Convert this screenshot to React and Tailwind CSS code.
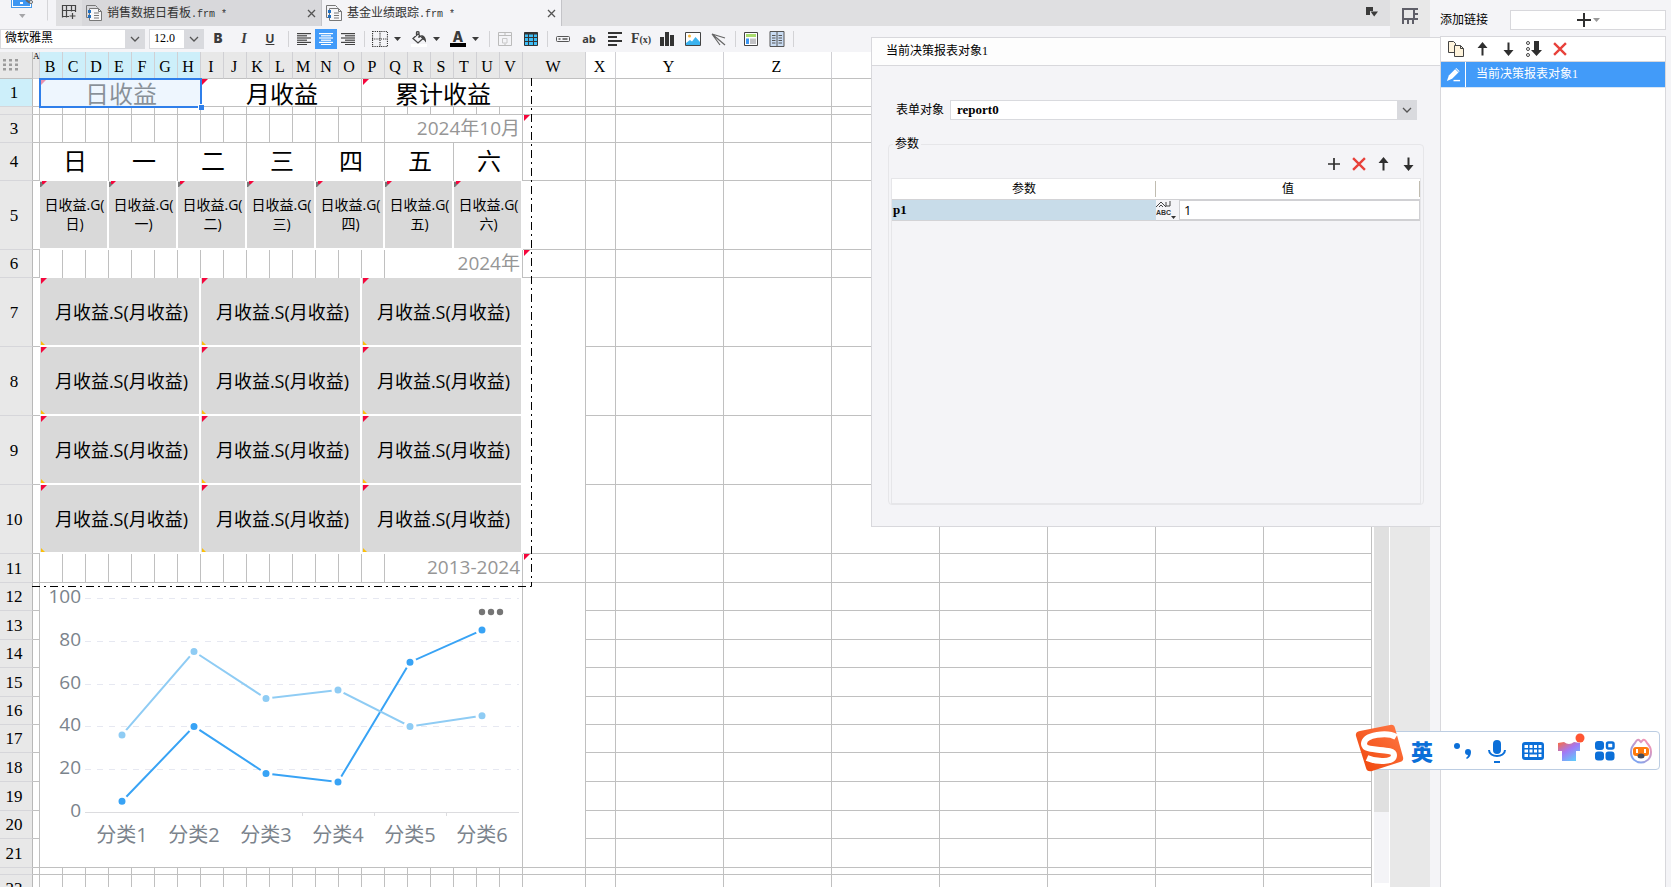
import React, { useState } from 'react';
import clsx from 'clsx';

const SERIF = "font-['Liberation_Serif','Noto_Sans_CJK_SC',serif]";
const SANS = "font-['Open_Sans','Noto_Sans_CJK_SC',sans-serif]";

const NARROW_COLS = 'BCDEFGHIJKLMNOPQRSTUV'.split('');
const WIDE_COLS = ['Y', 'Z', 'AA', 'AB', 'AC', 'AD', 'AE'];
const WEEKDAYS = ['日', '一', '二', '三', '四', '五', '六'];
const TITLES = ['日收益', '月收益', '累计收益'];

const CHART = {
  categories: ['分类1', '分类2', '分类3', '分类4', '分类5', '分类6'],
  series: [
    { color: '#38a3f5', values: [5, 40, 18, 14, 70, 85] },
    { color: '#8fccf4', values: [36, 75, 53, 57, 40, 45] },
  ],
};

/* ---------- icons ---------- */

const Icon = ({ size = 16, children, className }) => (
  <svg width={size} height={size} viewBox="0 0 16 16" fill="none" className={clsx('shrink-0', className)}>
    {children}
  </svg>
);

const ChevronIcon = () => (
  <svg width="10" height="6" viewBox="0 0 10 6" fill="none" stroke="#555" strokeWidth="1.3">
    <path d="M1 1l4 4 4-4" />
  </svg>
);

const CaretIcon = ({ color = '#3b3b3b' }) => (
  <svg width="7" height="4" viewBox="0 0 7 4" fill={color}>
    <path d="M0 0h7L3.5 4z" />
  </svg>
);

const CloseIcon = () => (
  <svg width="9" height="9" viewBox="0 0 9 9" stroke="#555" strokeWidth="1.3">
    <path d="M1 1l7 7M8 1L1 8" />
  </svg>
);

const FormIcon = () => (
  <Icon>
    <path d="M3.5 12.5h-3V.5h9l2 2" stroke="#777" />
    <path d="M3.5 3.500h9l3 3v9h-12z" fill="#f6f6f8" stroke="#777" />
    <path d="M12.500 3.500v3h3M8 8h5M8 10.500h5M8 13h5" stroke="#777" />
    <path d="M2 5h3v3H2zM2 10h3v3H2z" fill="#1f6fc0" />
  </Icon>
);

const GridAddIcon = () => (
  <Icon>
    <path d="M1.500 13.500V1.500h13V8M1.500 6.500h13M5.500 1.500v12M10.500 1.500v6M1 12.500h7M11.500 9v6M8.500 12h6" stroke="#444" strokeWidth="1.200" />
  </Icon>
);

const AlignIcon = ({ widths, offset, color = '#444' }) => (
  <svg width="14" height="12" viewBox="0 0 14 12" fill={color}>
    {widths.map((w, i) => (
      <rect key={i} x={offset(w)} y={i * 2.2} width={w} height="1.2" />
    ))}
  </svg>
);

const PlusIcon = ({ size = 14 }) => (
  <svg width={size} height={size} viewBox="0 0 14 14" stroke="#2f2f2f" strokeWidth="2">
    <path d="M7 0v14M0 7h14" />
  </svg>
);

const DeleteIcon = () => (
  <svg width="14" height="14" viewBox="0 0 13 13" stroke="#e8413a" strokeWidth="2.200">
    <path d="M1 1l11 11M12 1L1 12" />
  </svg>
);

const UpIcon = () => (
  <svg width="11" height="14" viewBox="0 0 11 14">
    <path d="M5.500 0L10.500 6H6.500v7.500h-2V6H.5z" fill="#2f2f2f" />
  </svg>
);

const DownIcon = () => (
  <svg width="11" height="14" viewBox="0 0 11 14">
    <path d="M5.500 14L10.500 8H6.500V.5h-2V8H.5z" fill="#2f2f2f" />
  </svg>
);

/* ---------- top bars ---------- */

const FileTab = ({ name, active }) => (
  <div
    className={clsx(
      'flex h-[26px] w-[240px] items-center border-r border-[#c4c4c8] pl-1 pr-1 text-xs text-[#333]',
      active ? 'bg-[#f4f4f7]' : 'bg-[#d8d8db]'
    )}
  >
    <FormIcon />
    <span className="ml-[5px] flex-1 whitespace-nowrap">
      {name}<span className="font-['Liberation_Mono',monospace] text-[10px]">.frm *</span>
    </span>
    <button type="button" aria-label="关闭" className="p-px"><CloseIcon /></button>
  </div>
);

const TabBar = () => (
  <div className="flex h-[26px] shrink-0 overflow-hidden bg-[#dfdfe1]">
    <div className="flex w-[56px] shrink-0 bg-[#f4f4f7]">
      <svg width="56" height="26" viewBox="0 0 56 26">
        <rect x="11.500" y="-8" width="20" height="15.500" fill="#fff" stroke="#4a9bea" />
        <rect x="13" y="-6" width="17" height="12" fill="#3d97f3" />
        <rect x="20" y="2" width="3" height="2" fill="#fff" />
        <path d="M26 0l4 3" stroke="#666" strokeWidth="2" />
        <circle cx="31" cy="2" r="1.500" fill="#fff" stroke="#666" />
        <path d="M19 14h6.500l-3.200 4z" fill="#a5a5a8" />
        <path d="M47.500 0v20.500" stroke="#d5d5d8" />
      </svg>
    </div>
    <button type="button" aria-label="新建" className="flex w-[26px] shrink-0 items-center justify-center pb-0.5">
      <GridAddIcon />
    </button>
    <FileTab name="销售数据日看板" />
    <FileTab name="基金业绩跟踪" active />
    <div className="flex flex-1 items-start justify-end pr-3 pt-[7px]">
      <svg width="12" height="11" viewBox="0 0 12 11">
        <path d="M0 0h7v4H4v4H0z" fill="#3b3b3b" />
        <path d="M4.500 4.500H12L8.200 9.500z" fill="#3b3b3b" />
      </svg>
    </div>
  </div>
);

const ToolButton = ({ label, active, className = 'w-[26px]', children }) => (
  <button
    type="button"
    aria-label={label}
    className={clsx('flex h-5 shrink-0 items-center justify-center text-[#3b3b3b]', className, active && 'bg-[#429bf9]')}
  >
    {children}
  </button>
);

const Divider = ({ className = 'w-[6px]' }) => (
  <div className={clsx('flex shrink-0 justify-center', className)}>
    <div className="h-4 w-px bg-[#d3d3d6]" />
  </div>
);

const DropButton = ({ label, children }) => (
  <ToolButton label={label} className="mr-1 w-[35px]">
    <span className="flex w-[22px] justify-center">{children}</span>
    <span className="flex w-[13px] justify-center"><CaretIcon /></span>
  </ToolButton>
);

const Combo = ({ label, value, className }) => (
  <div className={clsx('relative h-5 shrink-0 border border-[#d9dade] bg-white', className)}>
    <select aria-label={label} className="block h-4 w-full appearance-none bg-white pl-1 text-xs leading-4 text-black outline-none">
      <option>{value}</option>
    </select>
    <span className="pointer-events-none absolute inset-y-0 right-0 flex w-[19px] items-center justify-center bg-[#d9dade]">
      <ChevronIcon />
    </span>
  </div>
);

const Toolbar = () => (
  <div className="flex h-[26px] shrink-0 items-center bg-[#f4f4f7]">
    <Combo label="字体" value="微软雅黑" className="w-[145px]" />
    <Combo label="字号" value="12.0" className="ml-1 mr-px w-[55px]" />
    <ToolButton label="粗体"><b className="font-['Inter',sans-serif] text-[13px] font-black">B</b></ToolButton>
    <ToolButton label="斜体"><i className="text-sm font-bold">I</i></ToolButton>
    <ToolButton label="下划线"><u className="font-['Inter',sans-serif] text-xs font-bold">U</u></ToolButton>
    <Divider className="w-[10px]" />
    <ToolButton label="左对齐" className="w-[22px]"><AlignIcon widths={[14, 10, 14, 10, 14, 10]} offset={() => 0} /></ToolButton>
    <ToolButton label="居中" className="w-[22px]" active><AlignIcon widths={[14, 10, 14, 10, 14, 10]} offset={(w) => (14 - w) / 2} color="#fff" /></ToolButton>
    <ToolButton label="右对齐" className="w-[22px]"><AlignIcon widths={[14, 10, 14, 10, 14, 10]} offset={(w) => 14 - w} /></ToolButton>
    <Divider className="w-[10px]" />
    <DropButton label="边框">
      <Icon><path d="M.5.5h15v15H.5zM8 0v16M0 8h16" stroke="#333" strokeWidth="1.200" strokeDasharray="1.200 1" /></Icon>
    </DropButton>
    <DropButton label="填充">
      <Icon>
        <path d="M0 13h16v3H0z" fill="#fff" />
        <path d="M7 3L2 7.500l5 4.500 5-4.500L7 3zM5.500 5V1.500c0-1 2.500-1 2.500 0V7" stroke="#444" strokeWidth="1.300" />
        <path d="M10 4c3 0 5.500 3 5 7.500-1-1-1.500-2.500-3.500-3z" fill="#444" />
      </Icon>
    </DropButton>
    <DropButton label="字体颜色">
      <span className="flex flex-col items-center">
        <b className="font-['Inter',sans-serif] text-sm font-extrabold leading-3">A</b>
        <span className="h-1 w-4 bg-black" />
      </span>
    </DropButton>
    <Divider />
    <ToolButton label="合并单元格">
      <Icon>
        <path d="M1.500 1.500h13v13h-13zM1.500 4.500h13M8 1.500v3M8 12.500v2" stroke="#bbb" />
        <path d="M5.500 7.500h4.500v4.500h-4.500z" stroke="#c8c8c8" />
      </Icon>
    </ToolButton>
    <ToolButton label="表格">
      <Icon>
        <path d="M1.500 1.500h13v13h-13z" fill="#3dbdf5" stroke="#333" />
        <path d="M1.500 2.500h13" stroke="#333" strokeWidth="2" />
        <path d="M1.500 6.500h13M1.500 10.500h13M5.500 1.500v13M10.500 1.500v13" stroke="#333" />
      </Icon>
    </ToolButton>
    <Divider />
    <ToolButton label="文本框">
      <Icon><rect x="1.500" y="5.500" width="13" height="5" rx="1" stroke="#555" /><path d="M3.500 8h2M7.500 8h5" stroke="#555" strokeWidth="1.500" /></Icon>
    </ToolButton>
    <ToolButton label="标签"><span className="font-['Open_Sans',sans-serif] text-[11px] font-bold">ab</span></ToolButton>
    <ToolButton label="段落">
      <Icon><path d="M1 2h14M1 6h9M1 10h14M1 14h9" stroke="#333" strokeWidth="1.800" /></Icon>
    </ToolButton>
    <ToolButton label="公式"><span className="text-sm font-bold">F<span className="text-[10px]">(x)</span></span></ToolButton>
    <ToolButton label="图表">
      <Icon><path d="M1 6h4v9H1zM6 1h4v14H6zM11 4h4v11h-4z" fill="#333" /></Icon>
    </ToolButton>
    <ToolButton label="图片">
      <Icon>
        <path d="M.5 1.500h15v13H.5z" fill="#fff" stroke="#444" />
        <circle cx="4.500" cy="5" r="1.500" fill="#f8b63c" />
        <path d="M1 12l4-3 2 1.500L10.500 6 15 11v3H1z" fill="#3bb3ef" />
      </Icon>
    </ToolButton>
    <ToolButton label="斜线">
      <Icon><path d="M1 3l13 4M1 3l13 11M1 3l8 11" stroke="#666" strokeWidth="1.200" /></Icon>
    </ToolButton>
    <Divider />
    <ToolButton label="子报表">
      <Icon>
        <path d="M1.500 1.500h13v13h-13z" fill="#fff" stroke="#444" />
        <path d="M3 3h10v3H3z" fill="#a9dc6d" /><path d="M3 7.500h3V13H3z" fill="#3d97f3" /><path d="M7 7.500h6V13H7z" fill="#c2c2c5" />
      </Icon>
    </ToolButton>
    <ToolButton label="分栏">
      <Icon>
        <path d="M1 .5h14v15H1z" fill="#c9dcf3" stroke="#555" />
        <path d="M8 .5v15M3 4.500h3.500M3 7h3.500M3 9.500h3.500M3 12h3.500M9.500 4.500H13M9.500 7H13M9.500 9.500H13M9.500 12H13" stroke="#555" />
      </Icon>
    </ToolButton>
    <Divider />
  </div>
);

/* ---------- sheet ---------- */

const Marker = ({ className = 'left-0 top-0', half }) => (
  <svg width="7" height="6" viewBox="0 0 7 6" className={clsx('absolute', className)}>
    {half && <path d="M0 1h4v2L1 6H0z" fill="#777" />}
    <path d={half ? 'M2 0h5L4 3H2z' : 'M1 0h6L1 6z'} fill="#f5063c" />
  </svg>
);

const LINE = 'border-[#c0c0c0]';

const Cell = ({ right = true, bottom = true, className, children, ...rest }) => (
  <td {...rest} className={clsx('relative p-0', LINE, right && 'border-r', bottom && 'border-b', className)}>
    {children}
  </td>
);

const SheetRow = ({ no, height, active, hidden, aRight = true, wBottom, wRight = true, wMark, children }) => (
  <tr style={{ height }}>
    <th
      scope="row"
      className={clsx(
        'border-b border-r border-b-[#d6d6da] border-r-[#b8b8b8] p-0 pr-1 text-center text-[17px] font-normal leading-none',
        SERIF,
        active ? 'bg-[#cdeffa]' : 'bg-[#e8e8e8]'
      )}
    >
      {!hidden && no}
    </th>
    <Cell right={aRight} />
    {children}
    <Cell bottom={wBottom} right={wRight}>{wMark && <Marker />}</Cell>
    <Cell />
    {WIDE_COLS.map((c) => <Cell key={c} />)}
  </tr>
);

const emptyCells = (count, props) =>
  NARROW_COLS.slice(0, count).map((c) => <Cell key={c} {...props} />);

const LineChart = () => {
  const px = (i) => 82 + i * 72;
  const py = (v) => 229 - v * 2.14;
  return (
    <svg width="482" height="284" viewBox="0 0 482 284" className="block" role="img" aria-label="折线图">
      {[100, 80, 60, 40, 20, 0].map((v) => (
        <g key={v}>
          <text x="41" y={py(v) + 5} textAnchor="end" fontSize="19" fill="#7b838c">{v}</text>
          <line
            x1="45" x2="479" y1={Math.round(py(v)) + 0.5} y2={Math.round(py(v)) + 0.5}
            stroke={v ? '#e6e8f1' : '#dcdcdf'} strokeDasharray={v ? '6 6' : undefined}
          />
        </g>
      ))}
      {[262, 334, 406].map((x) => <path key={x} d={`M${x + 0.5} 229v4`} stroke="#dcdcdf" />)}
      {CHART.series.map(({ color, values }) => (
        <g key={color}>
          <polyline points={values.map((v, i) => `${px(i)},${py(v)}`).join(' ')} fill="none" stroke={color} strokeWidth="2" />
          {values.map((v, i) => (
            <circle key={i} cx={px(i)} cy={py(v)} r="5" fill={color} stroke="#fff" strokeWidth="3" />
          ))}
        </g>
      ))}
      {CHART.categories.map((c, i) => (
        <text key={c} x={px(i)} y="259" textAnchor="middle" fontSize="20" fill="#7b838c">{c}</text>
      ))}
      {[442, 451, 460].map((x) => <circle key={x} cx={x} cy="29" r="3.200" fill="#757575" />)}
    </svg>
  );
};

const MonthRow = ({ no }) => (
  <SheetRow no={no} height={69} aRight={false} wBottom={no === 10}>
    {TITLES.map((t) => (
      <td key={t} colSpan={7} className="relative border-b-2 border-r-2 border-white bg-[#d9d9d9] p-0 pl-1 text-center text-lg leading-6">
        <Marker />
        <svg width="5" height="4" viewBox="0 0 5 4" className="absolute bottom-0 left-0"><path d="M1 0l4 4H1z" fill="#fbbf0a" /></svg>
        月收益.S(月收益)
      </td>
    ))}
  </SheetRow>
);

const Sheet = () => (
  <div className="relative min-w-0 flex-1 overflow-hidden bg-white">
    <table className={clsx('w-[1372px] table-fixed border-separate border-spacing-0 text-black', SERIF)}>
      <colgroup>
        <col className="w-[33px]" />
        <col className="w-[7px]" />
        {NARROW_COLS.map((c) => <col key={c} className="w-[23px]" />)}
        <col className="w-[63px]" />
        <col className="w-[30px]" />
        {WIDE_COLS.map((c) => <col key={c} className="w-[108px]" />)}
      </colgroup>
      <thead>
        <tr className="h-[27px] text-base leading-none">
          <td className="border-b border-r border-[#c0c0c0] bg-[#e8e8e8] p-0">
            <svg width="16" height="12" viewBox="0 0 16 12" fill="#9c9c9c" className="ml-[3px]">
              {[0, 6, 12].map((x) => [0, 4.5, 9].map((y) => <rect key={`${x}-${y}`} x={x} y={y} width="3" height="2.500" />))}
            </svg>
          </td>
          <th className="border-b border-r border-[#d0d0d4] bg-[#e8e8e8] p-0 align-top text-[9px] font-normal">A</th>
          {NARROW_COLS.map((c, i) => (
            <th key={c} scope="col" className={clsx('border-b border-r border-b-[#c0c0c0] border-r-[#d0d0d4] p-0 pr-0.5 pt-1 font-normal', i < 7 ? 'bg-[#cdeffa]' : 'bg-[#e8e8e8]')}>
              {c}
            </th>
          ))}
          <th scope="col" className="border-b border-r border-b-[#c0c0c0] border-r-[#d0d0d4] bg-[#e8e8e8] p-0 pr-0.5 pt-1 font-normal">W</th>
          {['X', ...WIDE_COLS].map((c) => (
            <th key={c} scope="col" className="border-b border-r border-b-[#c0c0c0] border-r-[#d0d0d4] p-0 pr-0.5 pt-1 font-normal">{c}</th>
          ))}
        </tr>
      </thead>
      <tbody className={SANS}>
        <SheetRow no={1} height={28} active wBottom>
          {TITLES.map((t, i) => (
            <Cell key={t} colSpan={7} className="pl-0.5 pt-0.5 text-center text-2xl leading-6">
              <Marker />
              {t}
              {i === 0 && (
                <span className="absolute -bottom-0.5 -left-px -right-0.5 -top-px z-10 border-2 border-[#2f7fea] bg-[#e3f0fd]/60">
                  <span className="absolute -bottom-1 -right-1 size-[6px] border-l border-t border-white bg-[#2f7fea]" />
                </span>
              )}
            </Cell>
          ))}
        </SheetRow>
        <SheetRow no={2} height={8} hidden wBottom>{emptyCells(21)}</SheetRow>
        <SheetRow no={3} height={28} wMark>
          {emptyCells(15)}
          <Cell colSpan={6} className="pb-0.5 pr-0.5 text-right text-[19px] leading-6 text-[#969696]">2024年10月</Cell>
        </SheetRow>
        <SheetRow no={4} height={38}>
          {WEEKDAYS.map((d) => (
            <Cell key={d} colSpan={3} bottom={false} className="pb-0.5 pl-0.5 text-center text-2xl leading-6">{d}</Cell>
          ))}
        </SheetRow>
        <SheetRow no={5} height={69} aRight={false} wBottom>
          {WEEKDAYS.map((d) => (
            <td key={d} colSpan={3} className="relative border-b-2 border-r-2 border-white bg-[#d9d9d9] p-0 pb-0.5 pl-0.5 text-center text-sm leading-[19px]">
              <Marker half />
              <span className="whitespace-nowrap">日收益.G(<br />{d})</span>
            </td>
          ))}
        </SheetRow>
        <SheetRow no={6} height={28} wMark>
          {emptyCells(15, { bottom: false })}
          <Cell colSpan={6} bottom={false} className="pb-0.5 pr-0.5 text-right text-[19px] leading-6 text-[#969696]">2024年</Cell>
        </SheetRow>
        {[7, 8, 9, 10].map((no) => <MonthRow key={no} no={no} />)}
        <SheetRow no={11} height={29} wMark>
          {emptyCells(15)}
          <Cell colSpan={6} className="pb-0.5 pr-0.5 text-right text-[19px] leading-6 text-[#969696]">2013-2024</Cell>
        </SheetRow>
        {[28, 29, 28, 29, 28, 28, 29, 29, 28, 29].map((h, i) => (
          <SheetRow key={i} no={12 + i} height={h} wBottom={i === 9}>
            {i === 0 && <Cell colSpan={21} rowSpan={10}><LineChart /></Cell>}
          </SheetRow>
        ))}
        <SheetRow no={22} height={7} hidden wBottom>{emptyCells(21)}</SheetRow>
        <SheetRow no={23} height={28} wBottom>{emptyCells(21)}</SheetRow>
      </tbody>
    </table>
    {/* page boundary */}
    <svg width="500" height="509" viewBox="0 0 500 509" fill="none" className="pointer-events-none absolute left-8 top-[26px]">
      <path d="M499.500 0v508.500M0 508.500h499.500" stroke="#000" strokeDasharray="8 4 2 4" />
    </svg>
  </div>
);

const VerticalScrollbar = () => (
  <div className="flex w-4 shrink-0 flex-col bg-white pr-px">
    <div className="h-[91%] bg-[#e0e0e0]" />
    <div className="flex-1 bg-[#f4f4f7]" />
    <div className="h-1 bg-white" />
  </div>
);

/* ---------- link editor ---------- */

const ListButton = ({ label, className = 'w-[25px]', children }) => (
  <button type="button" aria-label={label} className={clsx('flex h-5 items-center justify-center', className)}>{children}</button>
);

const LinkPopup = () => {
  const [value, setValue] = useState('1');
  return (
    <div className="h-[490px] w-[570px] border border-[#d8d8dc] bg-[#f4f4f7] text-xs text-black">
      <h2 className="h-[28px] border-b border-[#d8d8dc] bg-[#fdfdfd] pl-3.5 leading-[26px]">当前决策报表对象1</h2>
      <div className="mt-[34px] flex h-5 items-center pl-6 pr-[23px]">
        <label htmlFor="target" className="w-[54px] shrink-0">表单对象</label>
        <div className="relative h-5 flex-1 border border-[#d9dade] bg-white">
          <select id="target" className="block h-full w-full appearance-none bg-white pl-1.5 text-[13px] font-bold leading-4 outline-none">
            <option>report0</option>
          </select>
          <span className="pointer-events-none absolute inset-y-0 right-0 flex w-[19px] items-center justify-center bg-[#d9dade]">
            <ChevronIcon />
          </span>
        </div>
      </div>
      <fieldset className="ml-4 mr-4 mt-3.5 h-[371px] rounded border border-[#e6e6e9] px-0.5 pb-0.5">
        <legend className="ml-0.5 px-0.5 leading-5">参数</legend>
        <div className="flex h-[22px] justify-end">
          <ListButton label="新增参数"><PlusIcon size={12} /></ListButton>
          <ListButton label="删除参数"><DeleteIcon /></ListButton>
          <ListButton label="上移参数"><UpIcon /></ListButton>
          <ListButton label="下移参数"><DownIcon /></ListButton>
        </div>
        <div className="mt-0.5 h-[326px] border border-[#e6e6e9]">
          <table className="w-full table-fixed border-separate border-spacing-0">
            <thead>
              <tr className="h-5 bg-white">
                <th className="relative p-0 font-normal leading-5">
                  参数<span className="absolute bottom-0.5 right-0 top-0.5 w-px bg-[#c0bcb0]" />
                </th>
                <th className="relative p-0 font-normal leading-5">
                  值<span className="absolute bottom-0.5 right-0 top-0.5 w-px bg-[#c0bcb0]" />
                </th>
              </tr>
            </thead>
            <tbody>
              <tr className="h-[22px]">
                <td className="border-y border-[#d3d3d6] bg-[#c8dce9] p-0 pl-px text-[13px] font-bold leading-5">p1</td>
                <td className="border-y border-[#d0d0d3] p-0">
                  <div className="flex h-5">
                    <button type="button" aria-label="参数类型" className="w-[23px] shrink-0">
                      <svg width="22" height="19" viewBox="0 0 22 19" fill="none">
                        <path d="M0 6l5-5 5 5M3 6l2-2 2 2M10 1v4h4V0" stroke="#444" />
                        <text x="0" y="14" fontSize="7" fontWeight="bold" fill="#333" fontFamily="Liberation Sans">ABC</text>
                        <path d="M15 15h5l-2.500 3z" fill="#333" />
                      </svg>
                    </button>
                    <input
                      aria-label="参数值"
                      value={value}
                      onChange={(e) => setValue(e.target.value)}
                      className={clsx('w-full min-w-0 border border-[#d0d0d3] bg-white px-1 pb-px text-[13px] leading-4 text-black outline-none', SANS)}
                    />
                  </div>
                </td>
              </tr>
            </tbody>
          </table>
        </div>
      </fieldset>
    </div>
  );
};

const LinkPanel = () => (
  <aside className="flex w-[241px] shrink-0 flex-col bg-[#f4f4f7] pl-2.5 pr-[5px] text-xs text-black">
    <div className="flex h-9 shrink-0 items-center pt-1">
      <span className="w-[70px]">添加链接</span>
      <button type="button" aria-label="添加链接" className="flex h-5 flex-1 items-center justify-center gap-0.5 border border-[#d8d8dc] bg-white">
        <PlusIcon size={14} />
        <CaretIcon color="#999" />
      </button>
    </div>
    <div className="flex-1 border border-b-0 border-[#d8d8dc] bg-white">
      <div className="flex h-[25px] items-center border-b border-[#d8d8dc] pl-0.5">
        <ListButton label="复制" className="w-[26px]">
          <Icon>
            <path d="M.5.5h5l2 2v9h-7z" fill="#fff4dc" stroke="#444" />
            <path d="M6.500 4.500h6l3 3v8h-9z" fill="#fff4dc" stroke="#444" />
            <path d="M12.500 4.500v3h3" stroke="#444" />
          </Icon>
        </ListButton>
        <ListButton label="上移" className="w-[26px]"><UpIcon /></ListButton>
        <ListButton label="下移" className="w-[26px]"><DownIcon /></ListButton>
        <ListButton label="排序" className="w-[26px]">
          <Icon>
            <circle cx="2" cy="2" r="1.500" stroke="#444" /><circle cx="2" cy="8" r="1.500" stroke="#444" /><circle cx="2" cy="14" r="1.500" stroke="#444" />
            <path d="M8 0h5v9h3l-5.500 6L5 9h3z" fill="#2f2f2f" />
          </Icon>
        </ListButton>
        <ListButton label="删除" className="w-[26px]"><DeleteIcon /></ListButton>
      </div>
      <div className="flex h-[26px] border-b border-[#d8e6f5] bg-[#429bf9] text-white">
        <button type="button" aria-label="编辑" className="flex w-[25px] items-center justify-center border-r border-white">
          <Icon size={15}>
            <path d="M1 15l2-6 8-8 3.500 3.500-8 8z" fill="#fff" /><path d="M10 2l4 4" stroke="#429bf9" /><path d="M8 14.500h7" stroke="#fff" strokeWidth="1.500" />
          </Icon>
        </button>
        <a href="#link" className="flex-1 pl-2.5 leading-6">当前决策报表对象1</a>
      </div>
    </div>
  </aside>
);

/* ---------- input method bar ---------- */

const ImeBar = () => (
  <div className="absolute bottom-[117px] right-[11px] z-30 flex h-[39px] w-[288px] items-center rounded border border-[#bccde2] bg-white pl-[38px]">
    <svg width="50" height="50" viewBox="0 0 50 50" className="absolute -left-[18px] -top-[9px]">
      <defs>
        <linearGradient id="ime" x1="1" y1="0" x2="0" y2="1"><stop offset="0" stopColor="#ff7a48" /><stop offset="1" stopColor="#ef4409" /></linearGradient>
      </defs>
      <path d="M5 8L35 2q4-1 5 3l8 29q1 4-3 5l-28 9q-5 1-6-3L1 13q-1-4 4-5z" fill="url(#ime)" />
      <path d="M41 14C33 9 9 11 9 21c0 9 30 3 30 11 0 8-18 7-27 3" fill="none" stroke="#fff" strokeWidth="6" />
    </svg>
    <span className="w-[32px] pb-0.5 font-['Noto_Sans_CJK_SC',sans-serif] text-[22px] font-black leading-6 text-[#0b6fd8]">英</span>
    <div className="flex flex-1 items-center justify-end text-[#0b6fd8]">
      <svg width="36" height="26" viewBox="0 0 36 26" fill="currentColor">
        <circle cx="14" cy="8" r="3" /><path d="M22 14a3 3 0 1 1 6 0q0 5-4 7l-1-1q2-1.500 2-3-3 0-3-3z" />
      </svg>
      <svg width="36" height="26" viewBox="0 0 36 26" fill="none" stroke="currentColor" strokeWidth="2">
        <rect x="14" y="2" width="8" height="14" rx="4" fill="currentColor" stroke="none" /><path d="M10 12c0 8 16 8 16 0M15 24h6" />
      </svg>
      <svg width="36" height="26" viewBox="0 0 36 26">
        <rect x="7" y="4" width="22" height="18" rx="3" fill="currentColor" />
        <path d="M9.500 7h3.500v3H9.500zM14.500 7h3v3h-3zM19 7h3v3h-3zM23.500 7h3v3h-3zM9.500 11.500h3.500v3H9.500zM14.500 11.500h3v3h-3zM19 11.500h3v3h-3zM23.500 11.500h3v3h-3zM9.500 16h3.500v3H9.500zM14.500 16.500h7.500v2.500h-7.500zM23.500 16h3v3h-3z" fill="#fff" />
      </svg>
      <svg width="36" height="36" viewBox="0 0 36 36">
        <defs>
          <linearGradient id="shirt" x1="0" y1="0" x2=".7" y2="1"><stop offset="0" stopColor="#ff6a3a" /><stop offset=".5" stopColor="#a278f5" /><stop offset="1" stopColor="#62c8fb" /></linearGradient>
        </defs>
        <path d="M13 9l-6 1v8h4v10h14V18h4v-8l-6-1q-5 4-10 0z" fill="url(#shirt)" />
        <circle cx="29" cy="5" r="4.500" fill="#ff5532" />
      </svg>
      <svg width="36" height="26" viewBox="0 0 36 26" fill="currentColor">
        <rect x="8" y="3" width="9" height="9" rx="3" /><rect x="8" y="13.500" width="9" height="9" rx="3" /><rect x="18.500" y="13.500" width="9" height="9" rx="3" />
        <rect x="20" y="4.500" width="6.500" height="6" rx="1.500" fill="none" stroke="currentColor" strokeWidth="2.500" />
      </svg>
      <svg width="36" height="26" viewBox="0 0 36 26">
        <defs>
          <linearGradient id="face" x1="0" y1="1" x2=".8" y2="0"><stop offset="0" stopColor="#6aa8fb" /><stop offset="1" stopColor="#f993b0" /></linearGradient>
        </defs>
        <path d="M12 5q2-4 4-3l2 2 2-2q2-1 4 3 4 4 4 9c0 14-20 14-20 0q0-5 4-9z" fill="#fff" stroke="url(#face)" strokeWidth="2" />
        <rect x="10" y="9" width="16" height="9" rx="3" fill="#ff7a0c" /><path d="M14 11v4M22 11v4" stroke="#fff" strokeWidth="2" />
        <ellipse cx="18" cy="18" rx="3.500" ry="2.500" fill="#444c5c" />
      </svg>
    </div>
  </div>
);

const App = () => (
  <div className={clsx('relative flex h-screen overflow-hidden bg-[#f4f4f7]', SERIF)}>
    <main className="flex min-w-0 flex-1 flex-col">
      <TabBar />
      <Toolbar />
      <div className="flex min-h-0 flex-1">
        <Sheet />
        <VerticalScrollbar />
      </div>
    </main>
    <div className="flex w-10 shrink-0 justify-center bg-[#e8e8e8] pt-2">
      <svg width="16" height="16" viewBox="0 0 16 16" fill="none" stroke="#5f5f68" strokeWidth="2">
        <path d="M1 16V1h15M1 11h11V1M12 6h4M12 11h4M6 11v5M11 11v5" />
      </svg>
    </div>
    <LinkPanel />
    <div className="absolute right-[230px] top-[37px] z-20"><LinkPopup /></div>
    <ImeBar />
  </div>
);

export default App;
